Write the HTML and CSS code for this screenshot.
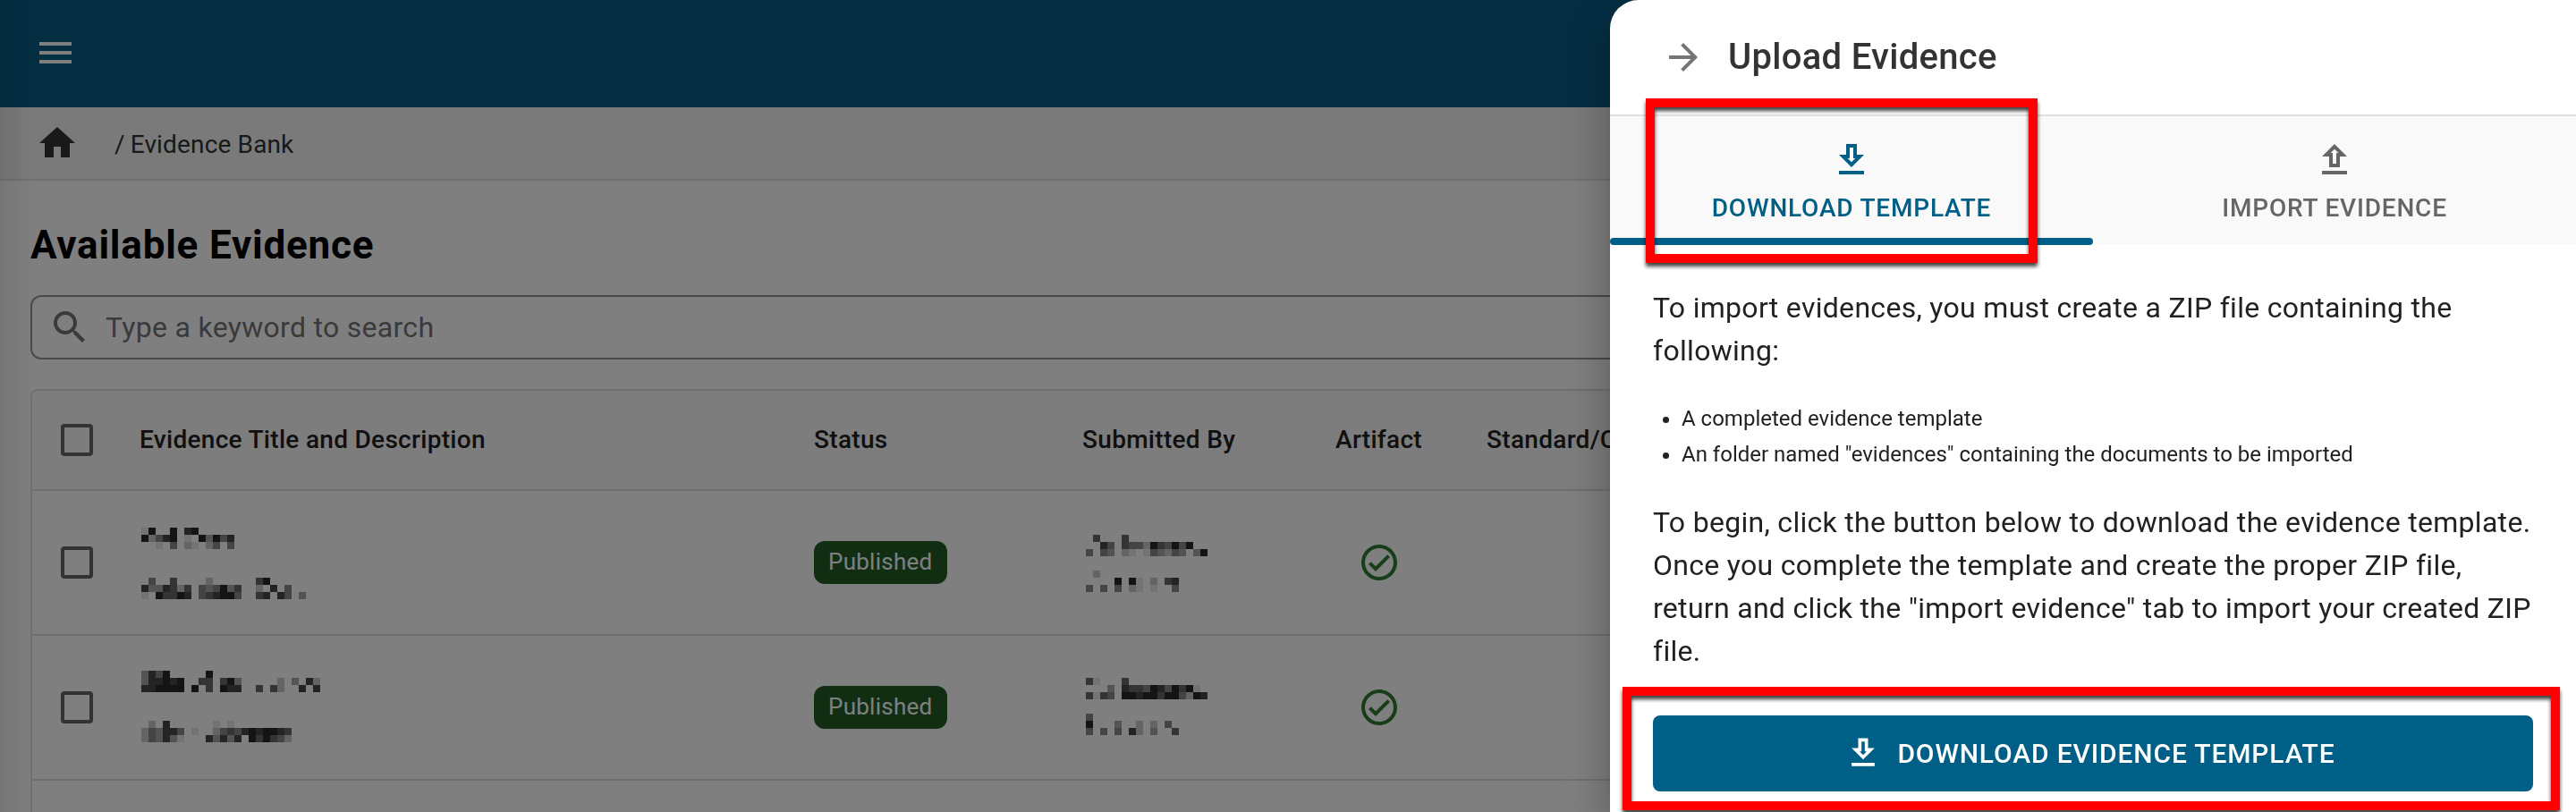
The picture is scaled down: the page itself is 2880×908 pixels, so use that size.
FILE: index.html
```html
<!DOCTYPE html>
<html lang="en">
<head>
  <meta charset="UTF-8" />
  <meta name="viewport" content="width=device-width, initial-scale=1.0"/>
  <title>Evidence Bank</title>
  <link rel="stylesheet" href="styles.css">
</head>
<body>
  <div class="page">
    <header class="topbar">
      <svg class="icon" viewBox="0 0 24 24"><path d="M3 18h18v-2H3v2zm0-5h18v-2H3v2zm0-7v2h18V6H3z"/></svg>
    </header>

    <nav class="breadcrumb">
      <svg class="icon" viewBox="0 0 24 24"><path d="M10 20v-6h4v6h5v-8h3L12 3 2 12h3v8z"/></svg>
      <span class="slash">/</span>
      <span class="crumb">Evidence Bank</span>
    </nav>

    <main class="content">
      <h1>Available Evidence</h1>

      <div class="search">
        <svg class="icon" viewBox="0 0 24 24"><path d="M15.5 14h-.79l-.28-.27C15.41 12.59 16 11.11 16 9.5 16 5.91 13.09 3 9.5 3S3 5.91 3 9.5 5.91 16 9.5 16c1.61 0 3.09-.59 4.23-1.57l.27.28v.79l5 4.99L20.49 19l-4.99-5zm-6 0C7.01 14 5 11.99 5 9.5S7.01 5 9.5 5 14 7.01 14 9.5 11.99 14 9.5 14z"/></svg>
        <span>Type a keyword to search</span>
      </div>

      <div class="table">
        <div class="row head">
          <span class="checkbox"></span>
          <span class="label">Evidence Title and Description</span>
          <span class="label">Status</span>
          <span class="label">Submitted By</span>
          <span class="label artifact">Artifact</span>
          <span class="label standard">Standard/C</span>
        </div>

        <div class="row">
          <span class="checkbox"></span>
          <div class="masked title">
            <svg class="mosaic" data-rows="71..1.21|16421.7.15142|..7.4.67.64.4"></svg>
            <svg class="mosaic" data-rows=".4..3....6......31|2552363.454153..6.2.4|7.13312.432114..32.24.5"></svg>
          </div>
          <div><span class="badge">Published</span></div>
          <div class="masked author">
            <svg class="mosaic" data-rows=".3...3|..24.3446134141|4.45.67.745645.51"></svg>
            <svg class="mosaic" data-rows=".6|....1.17.6.32|4.4.4.67.7..4"></svg>
          </div>
          <div class="artifact">
            <svg class="icon" viewBox="0 0 24 24"><path d="M12 2C6.48 2 2 6.48 2 12s4.48 10 10 10 10-4.48 10-10S17.52 2 12 2zm0 18c-4.41 0-8-3.59-8-8s3.59-8 8-8 8 3.59 8 8-3.59 8-8 8zm4.59-12.42L10 14.17l-2.59-2.58L6 13l4 4 8-8z"/></svg>
          </div>
        </div>

        <div class="row shifted">
          <span class="checkbox"></span>
          <div class="masked title">
            <svg class="mosaic" data-rows="5241.....1|522121..33.315.....6.5.26|221111.1.3.122..3.36..2.2"></svg>
            <svg class="mosaic" data-rows=".6.2......7.7|645224.7..64342121123|645257...25252.131346"></svg>
          </div>
          <div><span class="badge">Published</span></div>
          <div class="masked author">
            <svg class="mosaic" data-rows="37...3|...5.23341241317|3734.112113114612"></svg>
            <svg class="mosaic" data-rows="4|1...5..6.6.4|4.4.4.26.5..3"></svg>
          </div>
          <div class="artifact">
            <svg class="icon" viewBox="0 0 24 24"><path d="M12 2C6.48 2 2 6.48 2 12s4.48 10 10 10 10-4.48 10-10S17.52 2 12 2zm0 18c-4.41 0-8-3.59-8-8s3.59-8 8-8 8 3.59 8 8-3.59 8-8 8zm4.59-12.42L10 14.17l-2.59-2.58L6 13l4 4 8-8z"/></svg>
          </div>
        </div>

        <div class="row"></div>
      </div>
    </main>
  </div>

  <div class="backdrop"></div>

  <aside class="drawer">
    <div class="drawer-header">
      <svg class="icon" viewBox="0 0 24 24"><path d="M12 4l-1.41 1.41L16.17 11H4v2h12.17l-5.58 5.59L12 20l8-8z"/></svg>
      <h2>Upload Evidence</h2>
    </div>

    <div class="tabs">
      <div class="tab active">
        <svg class="icon" viewBox="0 0 24 24"><path d="M19 9h-4V3H9v6H5l7 7 7-7zm-8 2V5h2v6h1.17L12 13.17 9.83 11H11zm-6 7h14v2H5z"/></svg>
        <span>DOWNLOAD TEMPLATE</span>
      </div>
      <div class="tab">
        <svg class="icon" viewBox="0 0 24 24"><path d="M9 16h6v-6h4l-7-7-7 7h4v6zm3-10.17L14.17 8H13v6h-2V8H9.83L12 5.83zM5 18h14v2H5z"/></svg>
        <span>IMPORT EVIDENCE</span>
      </div>
    </div>

    <div class="drawer-body">
      <p>To import evidences, you must create a ZIP file containing the following:</p>
      <ul>
        <li>A completed evidence template</li>
        <li>An folder named "evidences" containing the documents to be imported</li>
      </ul>
      <p>To begin, click the button below to download the evidence template. Once you complete the template and create the proper ZIP file, return and click the "import evidence" tab to import your created ZIP file.</p>
      <button class="download-btn">
        <svg class="icon" viewBox="0 0 24 24"><path d="M19 9h-4V3H9v6H5l7 7 7-7zm-8 2V5h2v6h1.17L12 13.17 9.83 11H11zm-6 7h14v2H5z"/></svg>
        <span>DOWNLOAD EVIDENCE TEMPLATE</span>
      </button>
    </div>

    <div class="highlight highlight-tab"></div>
    <div class="highlight highlight-btn"></div>
  </aside>

  <script>
    // each digit is one block, 0 = black ... 7 = light grey, dot = empty
    document.querySelectorAll('.mosaic').forEach(svg => {
      const size = 8;
      svg.dataset.rows.split('|').forEach((row, y) => {
        [...row].forEach((c, x) => {
          if (c === '.') return;
          const rect = document.createElementNS('http://www.w3.org/2000/svg', 'rect');
          const grey = Number(c) * 32 + 8;
          rect.setAttribute('x', x * size);
          rect.setAttribute('y', y * size);
          rect.setAttribute('width', size);
          rect.setAttribute('height', size);
          rect.setAttribute('fill', `rgb(${grey},${grey},${grey})`);
          svg.appendChild(rect);
        });
      });
    });
  </script>
</body>
</html>
```
FILE: styles.css
```css
* {
  box-sizing: border-box;
}

body {
  font-family: Roboto, 'Liberation Sans', sans-serif;
  margin: 0;
  height: 908px;
  overflow: hidden;
  background-color: #fff;
  color: #212121;
}

h1, h2, p, ul {
  margin: 0;
}

.icon {
  width: 48px;
  height: 48px;
  fill: currentColor;
  flex-shrink: 0;
  display: block;
}

.page {
  height: 908px;
  overflow: hidden;
}

.topbar {
  height: 120px;
  padding: 35px 38px;
  background-color: #0a5c86;
  color: #fff;
}

.breadcrumb {
  display: flex;
  align-items: center;
  height: 82px;
  padding-left: 40px;
  background-color: #f5f5f5;
  border-bottom: 2px solid #e0e0e0;
  color: #333;
  font-size: 28px;
  letter-spacing: 0.15px;
}

.slash {
  margin-left: 40px;
  margin-right: 6px;
}

.slash, .crumb {
  padding-top: 2px;
}

.content {
  padding: 46px 34px 0;
}

h1 {
  font-size: 44px;
  line-height: 52px;
  font-weight: 700;
  letter-spacing: 0.8px;
  color: #000;
}

.search {
  display: flex;
  align-items: center;
  gap: 16px;
  height: 72px;
  margin-top: 30px;
  padding-left: 18px;
  border: 2px solid #949494;
  border-radius: 12px;
  color: #757575;
  font-size: 32px;
  letter-spacing: 0.3px;
}

.table {
  margin-top: 33px;
  border: 2px solid #e0e0e0;
  border-radius: 8px;
  overflow: hidden;
}

.row {
  display: grid;
  grid-template-columns: 120px 754px 300px 268px 127px 1fr;
  align-items: center;
  height: 162px;
  border-bottom: 2px solid #e0e0e0;
}

.head {
  height: 112px;
  background-color: #fafafc;
  font-size: 28px;
  font-weight: 500;
  letter-spacing: 0.3px;
}

.label {
  padding-bottom: 2px;
}

.checkbox {
  width: 36px;
  height: 36px;
  margin-left: 32px;
  border: 4px solid #666;
  border-radius: 4px;
}

.masked {
  align-self: start;
  display: flex;
  flex-direction: column;
}

.title {
  gap: 32px;
  padding: 41px 0 0 2px;
}

.author {
  gap: 16px;
  padding: 49px 0 0 4px;
}

.shifted .title {
  padding-top: 39px;
}

.shifted .author {
  padding-top: 47px;
}

.mosaic {
  width: 208px;
  height: 24px;
  shape-rendering: crispEdges;
}

.badge {
  display: inline-block;
  height: 48px;
  padding: 0 17px 0 16px;
  border-radius: 12px;
  background-color: #225c24;
  color: #fff;
  font-size: 26px;
  line-height: 46px;
  letter-spacing: 0.25px;
}

.artifact {
  display: flex;
  justify-content: center;
}

div.artifact {
  color: #2e7d32;
}

.standard {
  padding-left: 57px;
}

.backdrop {
  position: fixed;
  inset: 0;
  background: linear-gradient(to right, rgba(0, 0, 0, 0.54), rgba(0, 0, 0, 0.5) 36px);
}

.drawer {
  position: fixed;
  top: 0;
  right: 0;
  width: 1080px;
  height: 908px;
  background-color: #fff;
  border-top-left-radius: 32px;
  box-shadow: 0 16px 20px -10px rgba(0, 0, 0, 0.2), 0 32px 48px 4px rgba(0, 0, 0, 0.14), 0 12px 60px 10px rgba(0, 0, 0, 0.12);
}

.drawer-header {
  display: flex;
  align-items: center;
  gap: 26px;
  height: 130px;
  padding-left: 58px;
  border-bottom: 2px solid #e0e0e0;
  color: #757575;
}

h2 {
  padding-bottom: 2px;
  font-size: 40px;
  font-weight: 500;
  letter-spacing: 0.3px;
  color: #333;
}

.tabs {
  display: flex;
  height: 144px;
  background-color: #f9f9f9;
}

.tab {
  flex: 1;
  display: flex;
  flex-direction: column;
  align-items: center;
  gap: 13px;
  padding-top: 25px;
  position: relative;
  color: #666;
  font-size: 28px;
  font-weight: 500;
  line-height: 34px;
  letter-spacing: 0.8px;
}

.tab.active {
  color: #005f86;
}

.tab.active::after {
  content: '';
  position: absolute;
  left: 0;
  right: 0;
  bottom: 0;
  height: 8px;
  border-radius: 4px;
  background-color: #005f86;
}

.drawer-body {
  padding: 46px 48px 0;
}

.drawer-body p {
  font-size: 32px;
  line-height: 48px;
  letter-spacing: 0.3px;
}

.drawer-body ul {
  margin: 32px 0;
  padding-left: 32px;
  font-size: 24px;
  line-height: 40px;
}

.download-btn {
  display: flex;
  align-items: center;
  justify-content: center;
  gap: 16px;
  width: 100%;
  height: 85px;
  margin-top: 48px;
  padding: 0 8px 1px 0;
  border: none;
  border-radius: 8px;
  background-color: #005f86;
  color: #fff;
  font-family: inherit;
  font-size: 30px;
  font-weight: 500;
  letter-spacing: 0.86px;
}

.download-btn .icon {
  width: 44px;
  height: 44px;
}

/* red marker frames */
.highlight {
  position: absolute;
  border: 10px solid #f00;
  filter: drop-shadow(0 4px 2px rgba(0, 0, 0, 0.75));
}

.highlight-tab {
  left: 40px;
  top: 110px;
  width: 438px;
  height: 184px;
}

.highlight-btn {
  left: 14px;
  top: 768px;
  width: 1048px;
  height: 138px;
}
```
